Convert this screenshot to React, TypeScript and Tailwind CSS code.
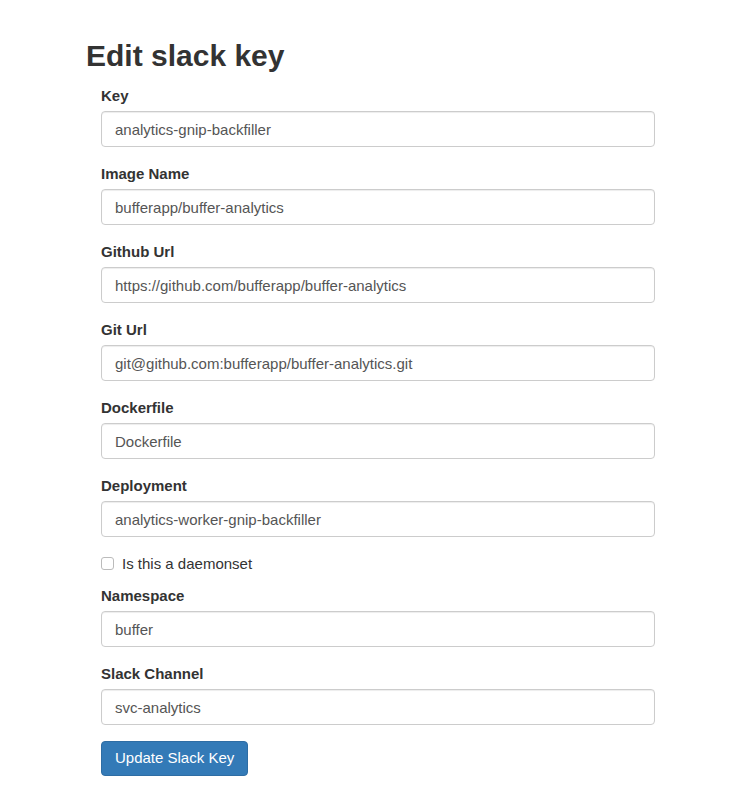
import React from "react";

const fields: { label: string; value: string }[] = [
  { label: "Key", value: "analytics-gnip-backfiller" },
  { label: "Image Name", value: "bufferapp/buffer-analytics" },
  { label: "Github Url", value: "https://github.com/bufferapp/buffer-analytics" },
  { label: "Git Url", value: "git@github.com:bufferapp/buffer-analytics.git" },
  { label: "Dockerfile", value: "Dockerfile" },
  { label: "Deployment", value: "analytics-worker-gnip-backfiller" },
];

const moreFields: { label: string; value: string }[] = [
  { label: "Namespace", value: "buffer" },
  { label: "Slack Channel", value: "svc-analytics" },
];

function Field({ label, value }: { label: string; value: string }) {
  return (
    <div className="mb-[16px]">
      <label className="block mb-[5px] text-[15px] leading-[21px] font-bold text-[#333]">
        {label}
      </label>
      <input
        type="text"
        defaultValue={value}
        className="block w-full h-[36px] px-[13px] text-[15px] text-[#555] bg-white border border-[#ccc] rounded-[4px] shadow-[inset_0_1px_1px_rgba(0,0,0,0.075)] outline-none"
      />
    </div>
  );
}

export default function App() {
  return (
    <div
      className="min-h-[810px] bg-white pt-[38px] text-[#333]"
      style={{ fontFamily: '"Liberation Sans", Arial, sans-serif' }}
    >
      <h1 className="ml-[86px] mb-[12px] text-[30px] leading-[35px] font-bold text-[#333]">
        Edit slack key
      </h1>

      <form className="ml-[101px] w-[554px]">
        {fields.map((f) => (
          <Field key={f.label} label={f.label} value={f.value} />
        ))}

        {/* daemonset checkbox */}
        <div className="flex items-center h-[21px] mb-[11px]">
          <input
            type="checkbox"
            className="appearance-none w-[13px] h-[13px] m-0 border border-[#bbb] rounded-[3px] bg-white"
          />
          <span className="ml-[8px] text-[15px] leading-[21px] text-[#333]">
            Is this a daemonset
          </span>
        </div>

        {moreFields.map((f) => (
          <Field key={f.label} label={f.label} value={f.value} />
        ))}

        <button
          type="button"
          className="h-[35px] px-[13px] text-[15px] text-white bg-[#337ab7] border border-[#2e6da4] rounded-[4px]"
        >
          Update Slack Key
        </button>
      </form>
    </div>
  );
}
